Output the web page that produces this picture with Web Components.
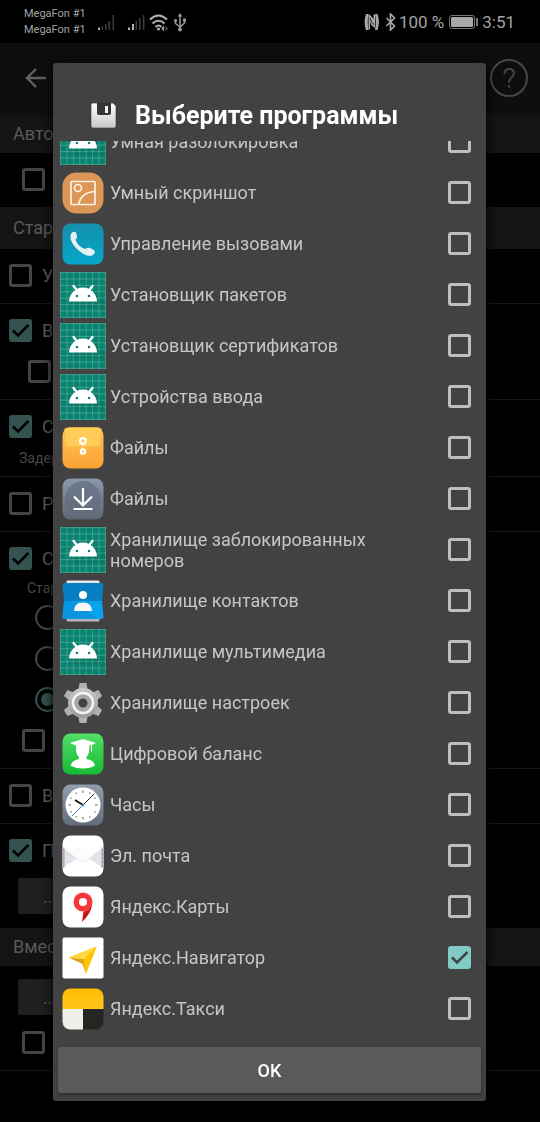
<!DOCTYPE html>
<html lang="ru">
<head>
<meta charset="utf-8">
<meta name="viewport" content="width=device-width, initial-scale=1">
<title>Выберите программы</title>
<style>
html, body { margin: 0; background: #000; }
body { min-height: 100vh; font-family: Roboto, "Noto Sans", sans-serif; color: #5a5a5a; }
</style>
</head>
<body>
<phone-status></phone-status>
<settings-page></settings-page>
<app-dialog></app-dialog>

<script>
const define = (name, html, setup) => {
  const tpl = document.createElement('template');
  tpl.innerHTML = html;
  customElements.define(name, class extends HTMLElement {
    constructor() {
      super();
      this.attachShadow({ mode: 'open' }).append(tpl.content.cloneNode(true));
    }
    connectedCallback() { if (setup) setup(this, this.shadowRoot); }
  });
};

const TICK = `<svg viewBox="0 0 23 23" aria-hidden="true"><path d="M4 11.500l5 5L19.500 6" fill="none" stroke="currentColor" stroke-width="2.600"/></svg>`;
const CHECK_CSS = `
  .box { position: relative; flex: none; width: 23px; height: 23px; }
  .box input { appearance: none; box-sizing: border-box; display: block; width: 23px; height: 23px; margin: 0;
    border: 3px solid var(--line); border-radius: 3px; }
  .box input:checked { background: var(--fill); border-color: var(--fill); }
  .box svg { position: absolute; inset: 0; display: none; color: var(--tick); pointer-events: none; }
  .box input:checked + svg { display: block; }`;

/* ---------- status bar ---------- */
define('phone-status', `
<style>
  :host { display: flex; align-items: center; height: 43px; padding: 0 25px 0 24px; background: #000; color: #a3a3a3; }
  .carriers { font-size: 11px; line-height: 16px; margin-right: 12px; }
  .carriers div { white-space: nowrap; }
  svg { display: block; flex: none; }
  .left { display: flex; align-items: center; }
  .right { display: flex; align-items: center; margin-left: auto; font-size: 17px; line-height: 22px; white-space: nowrap; }
</style>
<div class="carriers"><div>MegaFon #1</div><div>MegaFon #1</div></div>
<div class="left">
  <svg width="92" height="20" viewBox="0 0 92 20">
    <path d="M3.500 14.500h1.600V18H3.500zM7 12h1.600v6H7zM10.500 9h1.600v9h-1.600zM14.500 3h1.600v15h-1.600zM37.500 9h1.600v9h-1.600zM41 6h1.600v12H41zM44.800 3h1.600v15h-1.600z" fill="#3a3a3a"/>
    <path d="M0 15.500h2V18H0zM30 15.500h2V18h-2zM34 12h2v6h-2z" fill="#b0b0b0"/>
    <g fill="none" stroke="#b0b0b0" stroke-width="2"><path d="M52 7.500q8.500-8 17 0M54.500 11.500q6-5.500 12 0M57.500 15q3-3 6 0"/></g>
    <circle cx="60.500" cy="17" r="1.500" fill="#b0b0b0"/><path d="M66 13.500l-2.500 3 2.500 3z" fill="#b0b0b0"/><path d="M67.500 13.500l2.500 3-2.500 3z" fill="#555"/>
    <path d="M82 4v13M77.500 9v2.500l4.500 3.500 4.500-4V8" fill="none" stroke="#999" stroke-width="1.500"/>
    <path d="M82 1l2.300 3.500h-4.600z" fill="#999"/><circle cx="82" cy="17.500" r="1.900" fill="#999"/><circle cx="77.500" cy="8.500" r="1.600" fill="#999"/><path d="M85 6.500h3v3h-3z" fill="#999"/>
  </svg>
</div>
<div class="right">
  <svg width="35" height="18" viewBox="0 0 35 18">
    <path d="M2 1h2.500Q3 9 4.500 17H2Q-.8 9 2 1zM13.500 1H11q1.500 8 0 16h2.500q2.800-8 0-16z" fill="#a8a8a8"/>
    <path d="M5.500 1.500l4 4.500v-4.500h1.500v13.500q-4-2-5-6.500v8H4.500V1.500z" fill="#a8a8a8"/>
    <path d="M6 5q1 5 4.500 7" fill="none" stroke="#222" stroke-width="1"/>
    <path d="M22.500 5l8 8-4 4V1l4 4-8 8" fill="none" stroke="#a8a8a8" stroke-width="1.600"/>
  </svg>
  <span>100&nbsp;%</span>
  <svg width="38" height="16" viewBox="0 0 38 16">
    <rect x="5.500" y="1.500" width="25" height="13" rx="2" fill="none" stroke="#777"/>
    <rect x="7" y="3" width="22" height="10" rx="1" fill="#a8a8a8"/><path d="M32 4h2v8h-2z" fill="#777"/>
  </svg>
  <span>3:51</span>
</div>`);

/* ---------- settings behind the dialog ---------- */
define('section-head', `
<style>
  :host { display: flex; align-items: center; height: 38px; padding: 0 13px; background: #141414; font-size: 18px; line-height: 24px; }
  :host([tall]) { height: 42px; }
</style><slot></slot>`);

define('setting-group', `
<style>
  :host { display: block; padding: 6px 0 7px; border-bottom: 1px solid #161616; }
  :host([last]) { border-bottom: 0; }
</style><slot></slot>`);

define('setting-check', `
<style>
  :host { display: block; --line: #454545; --fill: #34524f; --tick: #000; }
  label { display: flex; align-items: center; gap: 10px; height: 41px; padding-left: 9px; font-size: 18px; }
  :host([level="1"]) label { padding-left: 22px; }
  :host([level="2"]) label { padding-left: 28px; }
  ${CHECK_CSS}
</style>
<label><span class="box"><input type="checkbox" aria-label="Параметр">${TICK}</span><slot></slot></label>`,
(el, root) => { root.querySelector('input').checked = el.hasAttribute('checked'); });

define('setting-radio', `
<style>
  label { display: flex; align-items: center; height: 41px; padding-left: 35px; }
  :host { display: block; }
  input { appearance: none; box-sizing: border-box; width: 25px; height: 25px; margin: 0; border: 2px solid #454545; border-radius: 50%; }
  input:checked { border-color: #34524f; background: radial-gradient(circle, #34524f 6px, transparent 7px); }
</style><label><input type="radio" aria-label="Вариант"><slot></slot></label>`,
(el, root) => { root.querySelector('input').checked = el.hasAttribute('checked'); });

define('setting-note', `
<style>
  :host { display: block; padding-left: 27px; font-size: 14px; line-height: 18px; color: #484848; }
  :host([wide]) { padding: 2px 0 2px 19px; }
</style><slot></slot>`);

define('setting-button', `
<style>
  :host { display: flex; margin: 7px 18px; }
  button { flex: 0 1 50%; height: 36px; padding: 0 25px; border: 0; border-radius: 2px; background: #1f1f1f; color: #5a5a5a; font: 18px Roboto, sans-serif; text-align: left; }
</style><button type="button"><slot></slot></button>`);

define('settings-page', `
<style>
  :host { display: block; }
  header { display: flex; align-items: center; justify-content: space-between; box-sizing: border-box; height: 72px; padding: 0 12px 2px 24px; background: #0e0e0e; }
  header button { display: block; padding: 0; border: 0; background: none; }
  svg { display: block; }
</style>
<header>
  <button type="button" aria-label="Назад"><svg width="24" height="24" viewBox="0 0 24 24"><path d="M22 12H3M12 3l-9 9 9 9" fill="none" stroke="#626262" stroke-width="2.400"/></svg></button>
  <button type="button" aria-label="Справка"><svg width="38" height="38" viewBox="0 0 38 38"><circle cx="19" cy="19" r="18" fill="none" stroke="#474747" stroke-width="2"/><path d="M14.500 15q0-5 4.700-5t4.700 4.500c0 3.500-4.900 4-4.900 9" fill="none" stroke="#474747" stroke-width="2"/><circle cx="19" cy="27.500" r="1.300" fill="#474747"/></svg></button>
</header>
<section-head>Авто</section-head>
<setting-group last><setting-check level="1"></setting-check></setting-group>
<section-head tall>Стар</section-head>
<setting-group><setting-check>У</setting-check></setting-group>
<setting-group><setting-check checked>В</setting-check><setting-check level="2"></setting-check></setting-group>
<setting-group><setting-check checked>С</setting-check><setting-note wide>Задер</setting-note></setting-group>
<setting-group><setting-check>Р</setting-check></setting-group>
<setting-group>
  <setting-check checked>С</setting-check><setting-note>Стар</setting-note>
  <setting-radio></setting-radio><setting-radio></setting-radio><setting-radio checked></setting-radio>
  <setting-check level="1"></setting-check>
</setting-group>
<setting-group><setting-check>В</setting-check></setting-group>
<setting-group last><setting-check checked>П</setting-check><setting-button>...</setting-button></setting-group>
<section-head>Вмес</section-head>
<setting-group><setting-button>...</setting-button><setting-check level="1"></setting-check></setting-group>`);

/* ---------- application icons, 46 x 46 ---------- */
const GRAD = (id, a, b) => `<linearGradient id="${id}" x1="0" y1="0" x2="0" y2="1"><stop stop-color="${a}"/><stop offset="1" stop-color="${b}"/></linearGradient>`;
const tile = (fill, rx = 8) => `<rect x="2.500" y="2.500" width="41" height="41" rx="${rx}" fill="${fill}"/>`;
const grid = [19, 29, 39, 49, 59, 69, 79, 89].map(n => `M${n} 18v72M18 ${n}h72`).join('');
const marks = Array.from({ length: 12 }, (_, i) => `<path d="M23 8.500v${i % 3 ? 1.5 : 2.500}" transform="rotate(${i * 30} 23 23)" stroke="#777" stroke-width="1.200"/>`).join('');
const teeth = Array.from({ length: 6 }, (_, i) => `<path d="M18 12l1.500-9h7l1.500 9z" transform="rotate(${i * 60} 23 23)"/>`).join('');
const stripes = x => [0, 1, 2, 3, 4].map(i => `<path d="M${x} ${15 + i * 4}l2-1v2l-2 1z" fill="#e29a9a"/><path d="M${x} ${17 + i * 4}l2-1v2l-2 1z" fill="#7f92cf"/>`).join('');
const ICONS = {
  android: `<svg viewBox="18 18 72 72"><path fill="#08836f" d="M18 18h72v72H18z"/><path d="M32 64l10 10h36l12 12V66L74 50z" fill="#000" opacity=".06"/><path d="${grid}" stroke="#fff" stroke-opacity=".3" stroke-width="1.100"/><path fill="#fff" d="M66 46l4.500-5.500c1-1.500-1.500-3.500-2.800-2l-4.700 5.900c-5.500-2.600-12.500-2.600-18 0l-4.700-5.900c-1.300-1.500-3.800.5-2.800 2L42 46C36 50 32.500 56 32 64h44c-.5-8-4-14-10-18z"/><circle cx="44.500" cy="55.500" r="2" fill="#08836f"/><circle cx="63.500" cy="55.500" r="2" fill="#08836f"/></svg>`,
  shot: `<svg viewBox="0 0 46 46">${tile('#dc9657', 14)}<g fill="none" stroke="#fff3e2" stroke-width="1.700"><rect x="11" y="11.500" width="24" height="23" rx="1"/><circle cx="18" cy="18" r="3.500"/><path d="M18.500 34q3-11.500 16-12.500"/></g></svg>`,
  phone: `<svg viewBox="0 0 46 46"><defs>${GRAD('g', '#1591ac', '#03a6ca')}</defs>${tile('url(#g)')}<path d="M12 11.500q3.500-2 4.500 1.500c1 3.500.5 4.500-1 5.500q2.500 7.500 10 9.500c2-2 4-1.500 7.500.5q3.500 2 .5 5c-2.500 2.500-7 1.500-11.500-1.500C14.500 27 11 21 10.500 17q-.3-4 1.500-5.500z" fill="#e6f0f3"/></svg>`,
  folder: `<svg viewBox="0 0 46 46"><defs>${GRAD('g', '#ffc34d', '#fda236')}</defs>${tile('url(#g)')}<path d="M4.500 4q2-1.500 5-1.500h27q3 0 5 1.500L40 19q-.5 2.500-3 2.500H8.500Q6 21.500 5.500 19z" fill="#ffcc58" stroke="#f2b84c" stroke-width=".5"/><path d="M22 19h2v5h-2z" fill="#ffe0a0" opacity=".6"/><g fill="none" stroke="#fff" stroke-width="2.200"><circle cx="23" cy="16" r="2.800"/><circle cx="23" cy="26.500" r="2.200"/></g></svg>`,
  download: `<svg viewBox="0 0 46 46"><defs>${GRAD('g', '#8b98ab', '#5f6773')}</defs>${tile('url(#g)')}<circle cx="23" cy="23" r="18" fill="#606c7c" opacity=".65"/><path d="M23 12v17M14 20.500l9 9 9-9M13.500 33h19" fill="none" stroke="#fff" stroke-width="2.200"/></svg>`,
  contacts: `<svg viewBox="0 0 46 46"><path d="M7 2.500h32l2 6H5z" fill="#e3e8eb"/><path d="M5 37h36l-2 6.500H7z" fill="#b3b8bc"/><path d="M2.500 7Q2.500 5 5 5h36q2.500 0 2.500 2L42 23H4z" fill="#087fc3"/><path d="M4 23h38l1.500 16q0 2-2 2h-37q-2 0-2-2z" fill="#09a2ed"/><path d="M4 23h11l22 18H4.500q-2 0-2-2z" fill="#0896e0"/><circle cx="23" cy="17" r="4" fill="#fff"/><path d="M14 33q0-8.500 9-8.500t9 8.500z" fill="#f4f8fa"/></svg>`,
  gear: `<svg viewBox="0 0 46 46"><defs>${GRAD('g', '#c9c9c9', '#999')}</defs><g fill="#b1b1b1">${teeth}</g><circle cx="23" cy="23" r="15" fill="url(#g)"/><circle cx="23" cy="23" r="10" fill="#a6a6a6" stroke="#f5f5f5" stroke-width="2.500"/><circle cx="23" cy="23" r="4.500" fill="#424242"/></svg>`,
  balance: `<svg viewBox="0 0 46 46"><defs>${GRAD('g', '#50df67', '#15bb35')}</defs>${tile('url(#g)')}<path d="M10 12l13-4 13 4-4 2v7h-1v-7l-2 .7c1 5-.5 9-2.500 11.300v2c5 1 8 3 8.500 6.500q-4 3-12 3t-12.500-3c1-3.500 4-5.500 8.500-6.500v-2c-3-3-3.500-7-2.500-11.300z" fill="#fff"/></svg>`,
  clock: `<svg viewBox="0 0 46 46"><defs>${GRAD('g', '#929db0', '#626c7b')}</defs>${tile('url(#g)')}<circle cx="23" cy="23" r="17.500" fill="#fff"/>${marks}<path d="M23 23l-11 11" stroke="#4687cf" stroke-width="1"/><path d="M23 23l11-11" stroke="#222" stroke-width="1"/><path d="M23 23l-8-5" stroke="#111" stroke-width="1.800"/><circle cx="23" cy="23" r="1.300" fill="#467ab5"/></svg>`,
  mail: `<svg viewBox="0 0 46 46">${tile('#fff')}<path d="M2.500 15L18 25 2.500 35z" fill="#e2e3e6"/><path d="M43.500 15L28 25l15.500 10z" fill="#e2e3e6"/><path d="M2.500 15l17 12.500q3.500 2.500 7 0L43.500 15" fill="#fcfcfc" stroke="#e1e1e1" stroke-width=".8"/>${stripes(2.5)}${stripes(41.5)}</svg>`,
  maps: `<svg viewBox="0 0 46 46">${tile('#fff')}<circle cx="23" cy="18" r="9.500" fill="#f8353a"/><path d="M32 20.500q-.5 8.500-10 17.500l1.500-10.500q6-.5 8.500-7z" fill="#c91616"/><circle cx="23" cy="18" r="4" fill="#fff"/></svg>`,
  navi: `<svg viewBox="0 0 46 46">${tile('#fff', 2)}<path d="M8.500 22.500L37 11 24 24z" fill="#ffd83d"/><path d="M37 11L26 39l-3-14.500z" fill="#ffc600"/><path d="M8.500 22.500l15 1.500L26 39l-3.500-10z" fill="#e0a212"/></svg>`,
  taxi: `<svg viewBox="0 0 46 46"><defs>${GRAD('g', '#ffbc00', '#ffc71b')}<clipPath id="c">${tile('#000')}</clipPath></defs><g clip-path="url(#c)"><path d="M2 2h42v21H2z" fill="url(#g)"/><path d="M2 23h21v21H2z" fill="#f0eee9"/><path d="M23 23h21v21H23z" fill="#252522"/></g></svg>`
};

define('app-icon', `<style>:host { display: block; flex: none; width: 46px; height: 46px; } svg { display: block; width: 46px; height: 46px; }</style><div></div>`,
(el, root) => { root.querySelector('div').innerHTML = ICONS[el.getAttribute('name')] || ''; });

define('app-row', `
<style>
  :host { display: block; --line: #bebebe; --fill: #80cbc4; --tick: #424242; }
  label { display: flex; align-items: center; height: 51px; padding: 0 15px 0 7px; color: #c6c6c6; }
  .name { flex: 1; padding: 0 64px 0 4px; font-size: 18px; line-height: 21px; }
  ${CHECK_CSS}
</style>
<label><app-icon></app-icon><span class="name"><slot></slot></span><span class="box"><input type="checkbox">${TICK}</span></label>`,
(el, root) => {
  root.querySelector('app-icon').setAttribute('name', el.getAttribute('icon'));
  root.querySelector('app-icon').connectedCallback();
  root.querySelector('input').checked = el.hasAttribute('checked');
});

/* The list is a reversed column with one child, so that it opens scrolled to its end. */
define('app-dialog', `
<style>
  :host { position: fixed; inset: 63px 54px 21px 53px; display: flex; flex-direction: column; box-sizing: border-box;
    border-radius: 3px; background: #424242; box-shadow: 0 4px 12px #000; }
  .title { display: flex; align-items: center; gap: 17px; flex: none; height: 50px; padding: 28px 37px 0; }
  h1 { margin: 0; font-size: 25px; line-height: 32px; font-weight: 700; color: #fff; white-space: nowrap; }
  .title svg { display: block; flex: none; }
  .scroll { display: flex; flex-direction: column-reverse; flex: 1; min-height: 0; margin-bottom: 13px; overflow-y: auto; scrollbar-width: none; }
  .list { flex: none; }
  .ok { flex: none; height: 46px; margin: 0 5px 8px; border: 0; border-radius: 2px; background: #5a5a5c; color: #fff;
    font: 500 18px Roboto, sans-serif; box-shadow: 0 2px 3px rgba(0,0,0,.35); }
</style>
<div class="title">
  <svg width="28" height="28" viewBox="0 0 28 28"><defs>${GRAD('f', '#fff', '#c8c8c8')}</defs><path d="M3 1h20l3 3v20q0 2-2 2H3q-2 0-2-2V3q0-2 2-2z" fill="url(#f)" stroke="#333" stroke-width=".6"/><path d="M7 1h14v10q0 2-2 2H9q-2 0-2-2z" fill="#353535"/><path d="M15 4h3v7h-3z" fill="#f3f3f3"/></svg>
  <h1>Выберите программы</h1>
</div>
<div class="scroll"><div class="list">
  <app-row icon="android">Умная разблокировка</app-row>
  <app-row icon="shot">Умный скриншот</app-row>
  <app-row icon="phone">Управление вызовами</app-row>
  <app-row icon="android">Установщик пакетов</app-row>
  <app-row icon="android">Установщик сертификатов</app-row>
  <app-row icon="android">Устройства ввода</app-row>
  <app-row icon="folder">Файлы</app-row>
  <app-row icon="download">Файлы</app-row>
  <app-row icon="android">Хранилище заблокированных номеров</app-row>
  <app-row icon="contacts">Хранилище контактов</app-row>
  <app-row icon="android">Хранилище мультимедиа</app-row>
  <app-row icon="gear">Хранилище настроек</app-row>
  <app-row icon="balance">Цифровой баланс</app-row>
  <app-row icon="clock">Часы</app-row>
  <app-row icon="mail">Эл. почта</app-row>
  <app-row icon="maps">Яндекс.Карты</app-row>
  <app-row icon="navi" checked>Яндекс.Навигатор</app-row>
  <app-row icon="taxi">Яндекс.Такси</app-row>
</div></div>
<button class="ok" type="button">OK</button>`);
</script>
</body>
</html>
